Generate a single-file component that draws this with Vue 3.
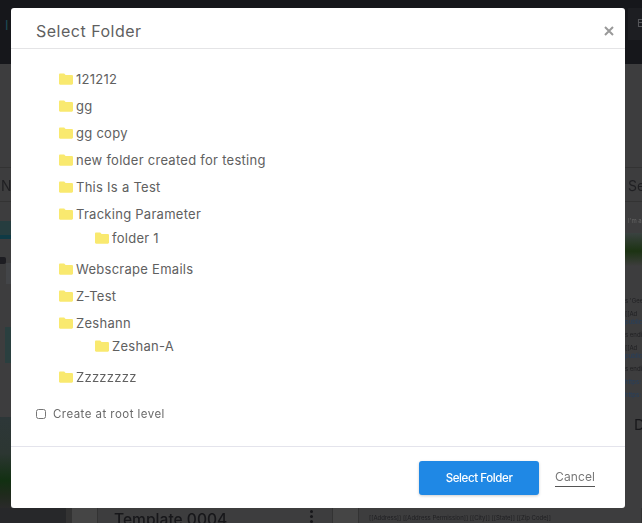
<template>
  <div class="page">
    <!-- dimmed page behind the dialog -->
    <div class="bg">
      <div class="bg-top">
        <span class="bg-top-l">I</span>
        <span class="bg-top-r">E</span>
      </div>
      <div class="bg-left">
        <div class="bg-band"></div>
        <div class="bg-name">Na</div>
        <div class="bg-stripe"></div>
        <div class="bg-pill"></div>
        <div class="bg-side"></div>
        <div class="bg-teal"></div>
        <div class="bg-grass"></div>
      </div>
      <div class="bg-bottom">
        <div class="seg-dark"></div>
        <div class="seg-gap"></div>
        <div class="seg-space"></div>
        <div class="bg-card">
          <span class="bg-card-title">Template 0004</span>
          <span class="bg-dots"></span>
        </div>
        <div class="seg-space seg-wide"></div>
        <div class="bg-card bg-card2">[[Address]] [[Address Permission]] [[City]] [[State]] [[Zip Code]]</div>
      </div>
      <div class="bg-right">
        <div class="bg-band"></div>
        <div class="bg-name">Se</div>
        <div class="bg-small">I'm a</div>
        <div class="bg-grass"></div>
        <div class="bg-lines">
          <p>s 'Gee</p>
          <p>[[Ad</p>
          <p class="lnk">public</p>
          <p>s endif</p>
          <p>[[Ad</p>
          <p class="lnk">public</p>
          <p>s endif</p>
          <p class="lnk gap">https:</p>
          <p class="lnk gap">https:</p>
        </div>
        <div class="bg-d">D</div>
      </div>
    </div>

    <div class="modal">
      <div class="modal-head">
        <h4>Select Folder</h4>
        <svg class="close" width="12" height="12" viewBox="0 0 12 12"><path d="M2 2l8 8M10 2l-8 8" stroke="#999" stroke-width="2" fill="none"/></svg>
      </div>
      <div class="modal-body">
        <ul class="tree">
          <li v-for="f in folders" :key="f.name" class="node">
            <div class="row">
              <svg class="folder" width="14" height="12" viewBox="0 0 14 12"><path d="M1.2 0.5h4l1.4 1.6h6.2c.6 0 1.2.5 1.2 1.2v7.2c0 .7-.6 1.2-1.2 1.2H1.2C.5 11.700 0 11.200 0 10.500V1.700C0 1 .5.500 1.200.500z" fill="#f9e96f"/></svg>
              <span>{{ f.name }}</span>
            </div>
            <div v-if="f.child" class="row child">
              <svg class="folder" width="14" height="12" viewBox="0 0 14 12"><path d="M1.2 0.5h4l1.4 1.6h6.2c.6 0 1.2.5 1.2 1.2v7.2c0 .7-.6 1.2-1.2 1.2H1.2C.5 11.700 0 11.200 0 10.500V1.700C0 1 .5.500 1.200.500z" fill="#f9e96f"/></svg>
              <span>{{ f.child }}</span>
            </div>
          </li>
        </ul>
        <label class="root"><input type="checkbox" /> <span>Create at root level</span></label>
      </div>
      <div class="modal-foot">
        <button class="btn">Select Folder</button>
        <a class="cancel">Cancel</a>
      </div>
    </div>
  </div>
</template>

<script setup>
const folders = [
  { name: '121212' },
  { name: 'gg' },
  { name: 'gg copy' },
  { name: 'new folder created for testing' },
  { name: 'This Is a Test' },
  { name: 'Tracking Parameter', child: 'folder 1' },
  { name: 'Webscrape Emails' },
  { name: 'Z-Test' },
  { name: 'Zeshann', child: 'Zeshan-A' },
  { name: 'Zzzzzzzz' }
]
</script>

<style>
html, body { margin: 0; background: #3d3d3d; overflow: hidden; }
</style>

<style scoped>
.page {
  position: relative;
  width: 642px;
  height: 523px;
  overflow: hidden;
  background: #3d3d3e;
  font-family: Inter, "Open Sans", sans-serif;
}
.bg { position: absolute; inset: 0; filter: blur(0.7px); }
.bg-top {
  height: 64px;
  background: #16171b;
  position: relative;
}
.bg-top-l { position: absolute; left: 5px; top: 17px; font-size: 13px; color: #1d4a55; }
.bg-top-r {
  position: absolute;
  left: 628px;
  top: 8px;
  width: 14px;
  height: 32px;
  box-sizing: border-box;
  padding: 8px 0 0 9px;
  background: #1d1e22;
  font-size: 11px;
  color: #55565a;
}
.bg-left { position: absolute; left: 0; top: 64px; width: 11px; height: 444px; overflow: hidden; }
.bg-band {
  position: absolute;
  top: 103px;
  left: 0;
  right: 0;
  height: 35px;
  border-top: 1px solid #333;
  border-bottom: 1px solid #333;
  box-sizing: border-box;
}
.bg-name { position: absolute; top: 113px; left: 1px; font-size: 14px; color: #1f1f22; }
.bg-stripe { position: absolute; top: 157px; left: 0; width: 11px; height: 18px; background: #263d3f; border-bottom: 4px solid #0f3a45; box-sizing: border-box; }
.bg-pill { position: absolute; top: 193px; left: 0; width: 6px; height: 7px; background: #1d1d22; border-radius: 0 2px 2px 0; }
.bg-side { position: absolute; top: 199px; left: 6px; width: 5px; height: 21px; background: #434548; }
.bg-teal { position: absolute; top: 263px; left: 0; width: 11px; height: 36px; background: linear-gradient(90deg, #3d3d3e 45%, #2a3f3f 45%); }
.bg-grass { position: absolute; top: 353px; left: 0; width: 11px; height: 91px; background: linear-gradient(#2d3738 0, #2c3632 40%, #123012 70%, #1f2a1c 85%, #2a2a2a 100%); }

.bg-bottom {
  position: absolute;
  left: 0;
  top: 508px;
  width: 642px;
  height: 15px;
  display: flex;
  overflow: hidden;
}
.seg-dark { width: 66px; background: #27282a; }
.seg-gap { width: 6px; background: #333; }
.seg-space { width: 25px; background: #454545; }
.seg-wide { width: 25px; }
.bg-card {
  position: relative;
  width: 236px;
  height: 40px;
  flex-shrink: 0;
  border-left: 1px solid #333;
  border-right: 1px solid #333;
  padding: 1px 0 0 16px;
  box-sizing: border-box;
  white-space: nowrap;
}
.bg-card-title { font-size: 15.6px; font-weight: 500; color: #17171a; }
.bg-dots {
  position: absolute;
  right: 19px;
  top: 2px;
  width: 3px;
  height: 3px;
  border-radius: 50%;
  background: #17171a;
  box-shadow: 0 5px 0 #17171a, 0 10px 0 #17171a;
}
.bg-card2 { flex: 1; width: auto; font-size: 6px; color: #1f1f22; padding: 6px 0 0 10px; }
.bg-right { position: absolute; left: 625px; top: 64px; width: 17px; height: 459px; overflow: hidden; }
.bg-right .bg-name { top: 113px; left: 3px; }
.bg-small { position: absolute; top: 153px; left: 3px; font-size: 6px; color: #666; }
.bg-right .bg-grass { top: 169px; width: 17px; height: 33px; background: linear-gradient(#3a4240, #1c3313 55%, #3d3d3d); }
.bg-lines { position: absolute; top: 228px; left: 0; font-size: 6px; color: #1f1f22; white-space: nowrap; }
.bg-lines p { margin: 5px 0 0; line-height: 8px; }
.bg-lines .lnk { color: #243f5f; margin-top: 0; }
.bg-lines .lnk.gap { margin-top: 5px; }
.bg-d { position: absolute; top: 351px; left: 9px; font-size: 15px; color: #17171a; }

.modal {
  position: absolute;
  left: 11px;
  top: 8px;
  width: 614px;
  height: 500px;
  background: #fff;
  border-radius: 3px;
  display: flex;
  flex-direction: column;
}
.modal-head {
  border-bottom: 1px solid #e4e4e6;
  padding: 6px 25px 0;
  box-sizing: border-box;
  height: 41px;
  display: flex;
  align-items: center;
  justify-content: space-between;
  flex-shrink: 0;
}
.modal-head h4 {
  margin: 0;
  font-size: 16px;
  font-weight: 400;
  color: #5f5f5f;
  letter-spacing: 0.5px;
}
.close { margin-right: -15px; margin-top: -1px; }
.modal-body { flex: 1; padding: 21px 25px 0; }
.tree { list-style: none; margin: 0; padding: 0 0 0 23px; }
.node { margin-bottom: 9px; }
.row {
  display: flex;
  align-items: center;
  gap: 3px;
  height: 18px;
  font-size: 13px;
  color: #606060;
  letter-spacing: 0.27px;
}
.child { padding-left: 36px; margin-top: 6px; margin-bottom: 13px; }
.node:nth-child(9) .child { margin-top: 5px; }
.root {
  display: flex;
  align-items: center;
  gap: 7px;
  font-size: 11.5px;
  color: #6a6a6a;
  letter-spacing: 0.45px;
  margin-top: 21px;
}
.root input { margin: 0; width: 10px; height: 10px; }
.modal-foot {
  height: 61px;
  border-top: 1px solid #e4e4ec;
  display: flex;
  align-items: center;
  justify-content: flex-end;
  padding-right: 30px;
  gap: 16px;
  flex-shrink: 0;
}
.btn {
  width: 120px;
  height: 34px;
  background: #1f88e5;
  color: #fff;
  border: 0;
  border-radius: 3px;
  font-family: inherit;
  font-size: 11.5px;
  font-weight: 500;
  letter-spacing: -0.4px;
  box-shadow: 0 1px 3px rgba(0, 0, 0, 0.2);
}
.cancel {
  font-size: 12px;
  color: #777;
  border-bottom: 1px solid #555;
  padding-bottom: 2px;
  letter-spacing: 0.1px;
}
</style>
